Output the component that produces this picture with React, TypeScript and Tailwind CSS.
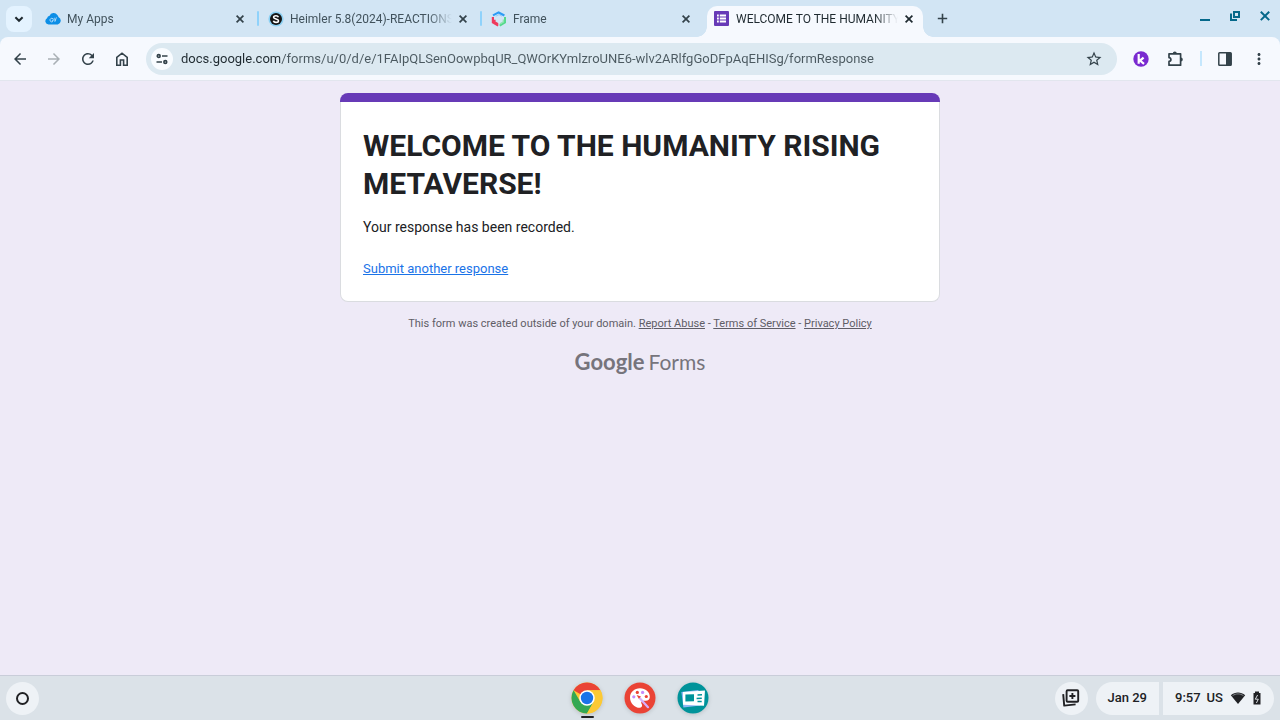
import type { ReactNode } from 'react';
import {
  MdArrowBack,
  MdArrowForward,
  MdMoreVert,
  MdRefresh,
  MdStarBorder,
} from 'react-icons/md';

function CloudIcon() {
  return (
    <svg viewBox="0 0 16 16" className="size-4" aria-hidden="true">
      <path
        d="M3.600 13.500A3.400 3.400 0 0 1 2 7.200a3.600 3.600 0 0 1 2.600-2.400A4.300 4.300 0 0 1 12.300 4c.7.500 1 1.200 1.100 2a4 4 0 0 1-.6 7.500Z"
        fill="#0c8ee6"
      />
      <path d="M8 7.800a1.800 1.800 0 1 0-.6 3l.5-1.500H6.900M9.400 6.800l-.8 2.600M11.400 6.400 9.800 10.800M9.200 9h1.800" fill="none" stroke="#b4dffd" strokeWidth="0.900" />
    </svg>
  );
}

function SkoolIcon() {
  return (
    <svg viewBox="0 0 16 16" className="size-4" aria-hidden="true">
      <circle cx="8" cy="8" r="7.600" fill="#8bd0f3" />
      <circle cx="8" cy="8" r="6" fill="#141414" />
      <path
        d="M10.400 6.200C10 5.100 9 4.700 8 4.700c-1.400 0-2.400.6-2.400 1.600 0 2.200 4.900 1.200 4.900 3.400 0 1.100-1.100 1.700-2.500 1.700-1.300 0-2.300-.6-2.600-1.700"
        fill="none"
        stroke="#fff"
        strokeWidth="1.600"
      />
    </svg>
  );
}

function FrameIcon() {
  return (
    <svg viewBox="0 0 16 16" className="size-4" fill="none" aria-hidden="true">
      <path d="M2 4.400 7.600 1.400l5.800 3" stroke="#2d9cf5" strokeWidth="2.200" />
      <path d="M4.800 5.200 8 3.600l3 1.600" stroke="#8fccfb" strokeWidth="1" />
      <path d="M1.900 6v5.400l5.300 3.200" stroke="#ef3a5d" strokeWidth="2.200" />
      <path d="M3.600 8.800v2.200L7 13" stroke="#ef3a5d" strokeWidth="2" />
      <path d="M14 6v5.400l-5.300 3.200" stroke="#55d98b" strokeWidth="2" />
      <path d="M12.400 8.600v2.200L9 12.800" stroke="#8ee5b0" strokeWidth="1.400" />
    </svg>
  );
}

function FormsIcon() {
  return (
    <svg viewBox="0 0 15 15" className="size-[15px]" aria-hidden="true">
      <rect width="15" height="15" rx="1" fill="#673ab7" />
      <path d="M3 3.500h1.800v1.900H3zM5.800 3.500H12v1.900H5.800zM3 6.500h1.800v1.900H3zM5.800 6.500H12v1.900H5.800zM3 9.500h1.800v1.900H3zM5.800 9.500H12v1.900H5.800z" fill="#fff" />
    </svg>
  );
}

function ChevronIcon() {
  return (
    <svg viewBox="0 0 16 16" className="size-4" fill="none" stroke="currentColor" strokeWidth="2" aria-hidden="true">
      <path d="m4.400 6.200 3.600 3.600 3.600-3.600" />
    </svg>
  );
}

function CrossIcon() {
  return (
    <svg viewBox="0 0 14 14" className="size-[14px]" stroke="currentColor" strokeWidth="1.700" aria-hidden="true">
      <path d="m3.600 3.600 6.800 6.800M10.400 3.600l-6.800 6.800" />
    </svg>
  );
}

function PlusIcon() {
  return (
    <svg viewBox="0 0 15 15" className="size-[15px]" stroke="currentColor" strokeWidth="1.600" aria-hidden="true">
      <path d="M7.500 2.800v9.400M2.800 7.500h9.400" />
    </svg>
  );
}

function HomeIcon() {
  return (
    <svg viewBox="0 0 18 18" className="size-[18px]" fill="none" stroke="currentColor" strokeWidth="1.600" aria-hidden="true">
      <path d="M3.800 7.300 9 3.200l5.200 4.100v7.900h-3.600V10H7.400v5.200H3.800Z" />
    </svg>
  );
}

function PuzzleIcon() {
  return (
    <svg viewBox="0 0 18 18" className="size-[18px]" aria-hidden="true">
      <path
        d="M3 3.800h11.600v11.400H3v-3.800a1.900 1.900 0 0 0 0-3.800Z"
        fill="none"
        stroke="currentColor"
        strokeWidth="1.700"
        strokeLinejoin="round"
      />
      <path d="M6.800 3.600a2 2 0 0 1 4 0ZM14.800 7.500a2 2 0 0 1 0 4Z" fill="currentColor" />
    </svg>
  );
}

function TuneIcon() {
  return (
    <svg viewBox="0 0 14 14" className="size-[14px]" fill="none" stroke="#33424a" strokeWidth="1.700" aria-hidden="true">
      <circle cx="3.700" cy="4" r="1.400" />
      <path d="M7 4h5.500M1.500 10H7" />
      <circle cx="10.300" cy="10" r="1.400" />
    </svg>
  );
}

function KamiIcon() {
  return (
    <svg viewBox="0 0 16 16" className="size-4" aria-hidden="true">
      <circle cx="8" cy="8" r="7.700" fill="#7a2bd0" />
      <path d="M5.700 3v9.800M10.600 6.600 7 9.600l4 3.200" fill="none" stroke="#fff" strokeWidth="2.200" />
    </svg>
  );
}

function SidePanelIcon() {
  return (
    <svg viewBox="0 0 14 14" className="size-[14px]" aria-hidden="true">
      <rect x="0.800" y="0.800" width="12.400" height="12.400" rx="0.800" fill="none" stroke="#33424a" strokeWidth="1.500" />
      <path d="M8 1h5v12H8z" fill="#33424a" />
    </svg>
  );
}

function ChromeIcon() {
  return (
    <svg viewBox="0 0 32 32" className="size-8 drop-shadow-sm" aria-hidden="true">
      <circle cx="16" cy="16" r="15.500" fill="#fcc934" />
      <path d="M16 16 2.580 8.250A15.500 15.500 0 0 1 29.420 8.250H16Z" fill="#ea4335" />
      <path d="M2.580 8.250A15.500 15.500 0 0 0 16 31.500L22.710 19.870 16 16 9.290 19.870Z" fill="#34a853" />
      <path d="M16 8.250h13.420A15.500 15.500 0 0 1 16 31.500l6.710-11.630Z" fill="#fcc934" />
      <circle cx="16" cy="16" r="7.750" fill="#fff" />
      <circle cx="16" cy="16" r="6.200" fill="#1a73e8" />
    </svg>
  );
}

function CanvasIcon() {
  return (
    <svg viewBox="0 0 32 32" className="size-8 drop-shadow-sm" aria-hidden="true">
      <circle cx="16" cy="16" r="15.500" fill="#ea4335" />
      <path
        d="M16 6.200c-5.600 0-10 4-10 9.200 0 5.700 4.600 10.400 9.800 10.400 1.500 0 2.300-1 2.300-2.200 0-1.400-.9-1.800-.9-3 0-1.100.9-1.900 2.200-1.900h2.400c2.400 0 4-1.600 4-4 0-4.900-4.300-8.500-9.800-8.500Z"
        fill="#fff"
      />
      <circle cx="9.800" cy="14.800" r="1.600" fill="#c58af9" />
      <circle cx="13.300" cy="10.400" r="1.600" fill="#ea4335" />
      <circle cx="18.600" cy="10.400" r="1.600" fill="#c58af9" />
      <circle cx="22.300" cy="14.500" r="1.600" fill="#ea4335" />
      <path d="m15.800 16.200 8.200 9" stroke="#d7aefb" strokeWidth="2.200" strokeLinecap="round" />
      <path d="m12.600 13 4.400 1.600-2.200 2.200Z" fill="#ea4335" />
    </svg>
  );
}

function ScreencastIcon() {
  return (
    <svg viewBox="0 0 32 32" className="size-8 drop-shadow-sm" aria-hidden="true">
      <circle cx="16" cy="16" r="15.500" fill="#00939a" />
      <path d="m4.400 10 2 15.600 17-2-2-15.600Z" fill="#8fb8f5" />
      <path d="m6 10 22-1.600-1 15.400-21-1Z" fill="#fff" />
      <path d="m8.400 12.600 8.600-.4v7l-8.600.4Z" fill="#00939a" />
      <path d="m20.500 13 4.500-.2M19.600 16.400l5.200-.2M20.500 19.600l4.200-.2" stroke="#00939a" strokeWidth="1.500" />
    </svg>
  );
}

function CaptureIcon() {
  return (
    <svg viewBox="0 0 20 20" className="size-5" fill="none" stroke="#202124" strokeWidth="1.900" aria-hidden="true">
      <rect x="5.600" y="2.200" width="11.600" height="11.600" rx="1" />
      <path d="M2.200 6.200 3.200 17.600l11.400-1.200" strokeLinejoin="round" />
      <path d="M11.400 5v6M8.400 8h6" strokeWidth="1.900" />
    </svg>
  );
}

function WifiIcon() {
  return (
    <svg viewBox="0 0 16 14" className="h-[14px] w-4" aria-hidden="true">
      <path d="M.8 4.200C5 .6 11 .6 15.200 4.200L8 13Z" fill="#202124" />
      <path d="M2.500 4.700C6 2.300 10 2.300 13.500 4.700" fill="none" stroke="#a9aeb3" strokeWidth="0.700" />
    </svg>
  );
}

function BatteryIcon() {
  return (
    <svg viewBox="0 0 10 14" className="h-[14px] w-[10px]" aria-hidden="true">
      <path d="M3 .5h4V2h1.500v11.500h-7V2H3Z" fill="#202124" />
      <path d="M5.600 4 3.300 8.200h3L4.400 12" fill="none" stroke="#eef2f6" strokeWidth="0.900" />
    </svg>
  );
}

type TabProps = { icon: ReactNode; title: string; active?: boolean };

function Tab({ icon, title, active = false }: TabProps) {
  return (
    <div
      className={
        active
          ? "relative z-10 flex h-[31px] w-[216px] min-w-0 items-center rounded-t-[10px] bg-[#f6f9fe] px-[7px] pb-[6px] before:absolute before:bottom-0 before:-left-[10px] before:size-[10px] before:bg-[radial-gradient(circle_at_0_0,transparent_9.5px,#f6f9fe_10px)] before:content-[''] after:absolute after:-right-[10px] after:bottom-0 after:size-[10px] after:bg-[radial-gradient(circle_at_100%_0,transparent_9.5px,#f6f9fe_10px)] after:content-['']"
          : 'flex h-[31px] w-[216px] min-w-0 items-center px-[7px] pb-[6px]'
      }
    >
      <button
        type="button"
        role="tab"
        aria-selected={active}
        className={
          active
            ? 'flex min-w-0 flex-1 items-center text-left text-xs text-[#1f2a30]'
            : 'flex min-w-0 flex-1 items-center text-left text-xs text-[#41525c]'
        }
      >
        <span className="flex w-[22px] shrink-0 items-center">{icon}</span>
        <span className="min-w-0 flex-1 overflow-hidden whitespace-nowrap [mask-image:linear-gradient(to_right,#000_calc(100%-24px),transparent)]">
          {title}
        </span>
      </button>
      <button
        type="button"
        aria-label={`Close ${title}`}
        className={active ? 'ml-1 text-[#1f2a30]' : 'ml-1 text-[#33424a]'}
      >
        <CrossIcon />
      </button>
    </div>
  );
}

function Divider() {
  return (
    <span className="flex h-[31px] w-[7px] shrink-0 pt-[5px] pl-[3px]">
      <span className="h-[15px] w-[2px] rounded-full bg-[#8fd2fb]" />
    </span>
  );
}

function TabStrip() {
  return (
    <header className="flex h-[37px] items-end bg-[#d2e5f4] pl-[6px]">
      <button
        type="button"
        aria-label="Search tabs"
        className="mr-[6px] mb-[5px] flex size-[26px] shrink-0 items-center justify-center rounded-lg bg-[#e4f3ff] text-[#1f2a30]"
      >
        <ChevronIcon />
      </button>
      <div role="tablist" className="flex min-w-0 items-end">
        <Tab icon={<CloudIcon />} title="My Apps" />
        <Divider />
        <Tab icon={<SkoolIcon />} title="Heimler 5.8(2024)-REACTIONS" />
        <Divider />
        <Tab icon={<FrameIcon />} title="Frame" />
        <span className="w-[7px] shrink-0" />
        <Tab icon={<FormsIcon />} title="WELCOME TO THE HUMANITY" active />
      </div>
      <button type="button" aria-label="New tab" className="mb-[11px] ml-3 text-[#33424a]">
        <PlusIcon />
      </button>
      <div className="mr-2 mb-[14px] ml-auto flex items-center gap-4 text-[#05688a]">
        <button type="button" aria-label="Minimize">
          <svg viewBox="0 0 14 14" className="size-[14px]" stroke="currentColor" strokeWidth="2" aria-hidden="true">
            <path d="M2 11h10" />
          </svg>
        </button>
        <button type="button" aria-label="Restore">
          <svg viewBox="0 0 14 14" className="size-[14px]" fill="none" stroke="currentColor" strokeWidth="2" aria-hidden="true">
            <path d="M6 3h5v5H6zM3 4.500V11h6" />
          </svg>
        </button>
        <button type="button" aria-label="Close window">
          <svg viewBox="0 0 14 14" className="size-[14px]" stroke="currentColor" strokeWidth="2" aria-hidden="true">
            <path d="m2.800 2.700 8.400 8.400M11.200 2.700l-8.400 8.400" />
          </svg>
        </button>
      </div>
    </header>
  );
}

function Toolbar() {
  return (
    <div className="bg-[#d2e5f4]">
      <nav className="flex h-11 items-center rounded-t-lg border-b border-[#e2e6ee] bg-[#f6f9fe] pr-3 pl-[11px] text-[#33424a]">
        <div className="flex items-center gap-4">
          <button type="button" aria-label="Back"><MdArrowBack className="size-[18px]" /></button>
          <button type="button" aria-label="Forward" className="text-[#a9b0b5]"><MdArrowForward className="size-[18px]" /></button>
          <button type="button" aria-label="Reload"><MdRefresh className="size-[18px]" /></button>
          <button type="button" aria-label="Home"><HomeIcon /></button>
        </div>
        <div className="ml-[15px] flex h-8 min-w-0 flex-1 items-center rounded-full bg-[#dce9f1] pr-[14px] pl-[5px]">
          <button type="button" aria-label="View site information" className="flex size-[22px] shrink-0 items-center justify-center rounded-full bg-[#f9fcff]">
            <TuneIcon />
          </button>
          <input
            type="text"
            aria-label="Address and search bar"
            defaultValue="docs.google.com/forms/u/0/d/e/1FAIpQLSenOowpbqUR_QWOrKYmlzroUNE6-wlv2ARlfgGoDFpAqEHISg/formResponse"
            className="ml-2 min-w-0 flex-1 bg-[linear-gradient(to_right,#1f2a30_99px,#4b5960_99px)] bg-clip-text text-[13px] text-transparent caret-black outline-none"
          />
          <button type="button" aria-label="Bookmark this tab"><MdStarBorder className="size-[18px]" /></button>
        </div>
        <button type="button" aria-label="Kami extension" className="ml-4"><KamiIcon /></button>
        <button type="button" aria-label="Extensions" className="ml-[17px]"><PuzzleIcon /></button>
        <span className="ml-4 h-[15px] w-[2px] bg-[#c5e7fd]" />
        <button type="button" aria-label="Side panel" className="ml-4"><SidePanelIcon /></button>
        <button type="button" aria-label="Menu" className="ml-[18px]"><MdMoreVert className="size-[18px]" /></button>
      </nav>
    </div>
  );
}

function FormPage() {
  return (
    <main className="flex-1 bg-[#eeeaf7] px-4 pt-3 pb-8">
      <section className="mx-auto max-w-[600px]">
        <div className="h-[9px] rounded-t-lg bg-[#673ab7]" />
        <div className="rounded-b-lg border-x border-b border-[#dadce0] bg-white px-[22px] pt-[25px] pb-[22px] text-[#202124]">
          <h1 className="text-[30px] leading-[38px] font-bold">WELCOME TO THE HUMANITY RISING METAVERSE!</h1>
          <p className="mt-[14px] text-sm leading-5">Your response has been recorded.</p>
          <a href="#another" className="mt-[22px] block w-fit text-[13px] leading-5 text-[#1a73e8] underline">Submit another response</a>
        </div>
      </section>
      <p className="mt-3 text-center text-[11px] leading-5 text-[#5f5d66]">
        This form was created outside of your domain.{' '}
        <a href="#report" className="underline">Report Abuse</a> - <a href="#terms" className="underline">Terms of Service</a> -{' '}
        <a href="#privacy" className="underline">Privacy Policy</a>
      </p>
      <a
        href="#forms"
        className="mx-auto mt-4 flex w-fit items-baseline gap-1 font-['Lato',sans-serif] text-[21px] leading-6 text-[#76747c]"
      >
        <span className="text-[22px] font-bold">Google</span>
        <span>Forms</span>
      </a>
    </main>
  );
}

function Shelf() {
  return (
    <footer className="grid h-[45px] grid-cols-[1fr_auto_1fr] items-center border-t border-[#c9cdd9] bg-[#dbe2e8] px-[6px] text-[13px] font-medium text-[#202124]">
      <button type="button" aria-label="Launcher" className="flex size-[33px] items-center justify-center rounded-full bg-[#eef2f6]">
        <span className="size-[13px] rounded-full border-2 border-[#202124]" />
      </button>
      <div className="flex items-center gap-[21px]">
        <button type="button" aria-label="Chrome" className="relative">
          <ChromeIcon />
          <span className="absolute -bottom-[4px] left-[10px] h-[2px] w-[13px] rounded-full bg-[#202124]" />
        </button>
        <button type="button" aria-label="Canvas"><CanvasIcon /></button>
        <button type="button" aria-label="Screencast"><ScreencastIcon /></button>
      </div>
      <div className="flex items-center justify-end">
        <button type="button" aria-label="Screen captures" className="flex size-[33px] items-center justify-center rounded-full bg-[#eef2f6]">
          <CaptureIcon />
        </button>
        <button type="button" className="ml-2 h-[33px] rounded-l-full rounded-r-sm bg-[#eef2f6] px-3">Jan 29</button>
        <button type="button" className="ml-1 flex h-[33px] items-center rounded-l-sm rounded-r-full bg-[#eef2f6] px-3">
          <span>9:57</span>
          <span className="ml-[6px]">US</span>
          <span className="ml-[7px]"><WifiIcon /></span>
          <span className="ml-[6px]"><BatteryIcon /></span>
        </button>
      </div>
    </footer>
  );
}

export default function App() {
  return (
    <div className="flex min-h-screen flex-col font-['Roboto',sans-serif]">
      <TabStrip />
      <Toolbar />
      <FormPage />
      <Shelf />
    </div>
  );
}
